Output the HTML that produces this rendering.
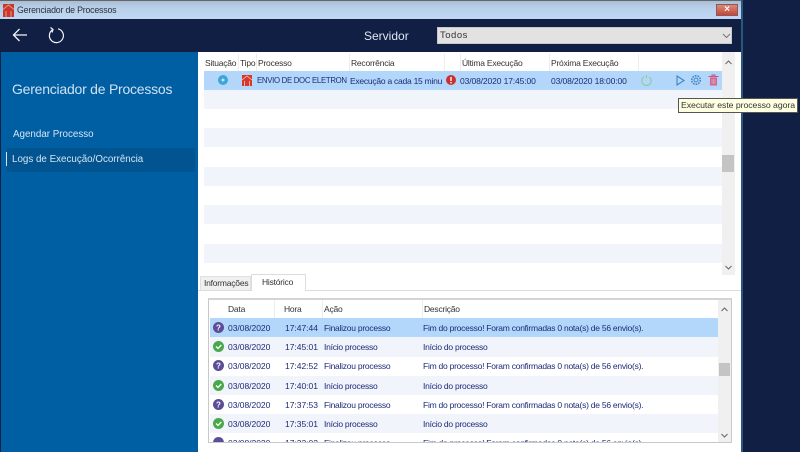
<!DOCTYPE html>
<html lang="pt"><head><meta charset="utf-8"><title>Gerenciador de Processos</title>
<style>
html,body{margin:0;padding:0;background:#121f45}
body{width:800px;height:452px;position:relative;overflow:hidden;font-family:"Liberation Sans",sans-serif;font-size:9px;color:#222;filter:blur(.3px)}
div,span{position:absolute;white-space:nowrap}
svg{position:absolute;overflow:visible}
.h{color:#333;font-size:8.500px;letter-spacing:-.22px;line-height:12px}
.c{color:#1d2a78;font-size:8.500px;letter-spacing:-.25px;line-height:12px}
.d{letter-spacing:-.02px}
.band{background:#f1f4fb}
.sep{width:1px;background:#ededed}
</style></head><body>
<div style="left:0;top:0;width:742px;height:19px;background:linear-gradient(#aabdd4,#b9d0ea 40%,#c0d8f2);border-top:1px solid #666;box-sizing:border-box"></div>
<svg style="left:3px;top:4px" width="11" height="13" viewBox="0 0 11 13"><rect width="11" height="13" fill="#c8382c"/><path d="M0 5.500L5.500 1 11 5.500M3 7V13M8 7V13" stroke="#f0b0a0" stroke-width=".8" fill="none"/></svg>
<div style="left:17px;top:4px;font-size:8.800px;letter-spacing:-.2px;line-height:12px;color:#2a2f38">Gerenciador de Processos</div>
<div style="left:716px;top:4px;width:22px;height:12px;background:linear-gradient(#dc8a78,#c2473a);border:1px solid #8a5a58;box-sizing:border-box;color:#fff;font-size:10px;line-height:10px;text-align:center;font-weight:bold">×</div>
<div style="left:0;top:19px;width:741px;height:33px;background:#121f45"></div>
<svg style="left:12px;top:27px" width="16" height="16" viewBox="0 0 16 16"><path d="M15 8H1.500M7.500 2L1.500 8l6 6" stroke="#f2f4f8" stroke-width="1.300" fill="none"/></svg>
<svg style="left:48px;top:27px" width="16" height="16" viewBox="0 0 16 16"><path d="M5 2.500A7 7 0 1 0 10 1.800M2.500 0.500L5 2.500 4 5.500" stroke="#f2f4f8" stroke-width="1.200" fill="none"/></svg>
<div style="left:364px;top:29px;font-size:12px;line-height:15px;color:#dfe6f0">Servidor</div>
<div style="left:437px;top:27px;width:295px;height:17px;background:#e2e2e2;border:1px solid #c8c8c8;box-sizing:border-box"></div>
<div style="left:440px;top:29px;font-size:9.500px;line-height:13px;letter-spacing:.5px;color:#333">Todos</div>
<svg style="left:722px;top:33px" width="9" height="6" viewBox="0 0 9 6"><path d="M1 1l3.500 3.500L8 1" stroke="#777" fill="none"/></svg>
<div style="left:1px;top:52px;width:197px;height:400px;background:#005ea3"></div>
<div style="left:12px;top:80px;font-size:14px;line-height:18px;color:#cfe2f2;letter-spacing:-.23px">Gerenciador de Processos</div>
<div style="left:13px;top:128px;font-size:9.800px;line-height:13px;color:#d5e5f3">Agendar Processo</div>
<div style="left:7px;top:148px;width:188px;height:24px;background:#01548f"></div>
<div style="left:6px;top:152px;width:1px;height:14px;background:#d5e5f3"></div>
<div style="left:12px;top:153px;font-size:9.800px;line-height:13px;color:#d5e5f3">Logs de Execução/Ocorrência</div>
<div style="left:198px;top:52px;width:543px;height:400px;background:#fff"></div>
<div style="left:741px;top:0;width:2px;height:452px;background:#28587e"></div>
<div class="h" style="left:205px;top:57px">Situação</div><div class="h" style="left:240px;top:57px">Tipo</div><div class="h" style="left:258px;top:57px">Processo</div><div class="h" style="left:351px;top:57px">Recorrência</div><div class="h" style="left:462px;top:57px">Última Execução</div><div class="h" style="left:551px;top:57px">Próxima Execução</div>
<div class="sep" style="left:238px;top:54px;height:17px"></div><div class="sep" style="left:256px;top:54px;height:17px"></div><div class="sep" style="left:349px;top:54px;height:17px"></div><div class="sep" style="left:444px;top:54px;height:17px"></div><div class="sep" style="left:460px;top:54px;height:17px"></div><div class="sep" style="left:549px;top:54px;height:17px"></div><div class="sep" style="left:638px;top:54px;height:17px"></div>
<div style="left:204px;top:71px;width:518px;height:19px;background:#b3d7fb"></div>
<div class="band" style="left:204px;top:90px;width:518px;height:19px"></div>
<div class="band" style="left:204px;top:128px;width:518px;height:19px"></div>
<div class="band" style="left:204px;top:167px;width:518px;height:19px"></div>
<div class="band" style="left:204px;top:205px;width:518px;height:19px"></div>
<div class="band" style="left:204px;top:244px;width:518px;height:19px"></div>
<svg style="left:218px;top:75px" width="10" height="10"><circle cx="5" cy="5" r="5" fill="#3fa5d6"/><circle cx="5" cy="5" r="1.500" fill="#bfe3f5"/></svg>
<svg style="left:242px;top:75px" width="10" height="11" viewBox="0 0 10 11"><rect width="10" height="11" fill="#d8382c"/><path d="M0 5L5 1l5 4M2.500 6v5M7.500 6v5" stroke="#f8c8c0" stroke-width=".8" fill="none"/></svg>
<div class="c" style="left:257px;top:75px;font-size:7.800px;letter-spacing:-.3px">ENVIO DE DOC ELETRON</div>
<div class="c" style="left:350px;top:75px">Execução a cada 15 minu</div>
<svg style="left:446px;top:75px" width="10" height="10"><circle cx="5" cy="5" r="5" fill="#cc2f2f"/><rect x="4.300" y="2" width="1.400" height="4" fill="#fff"/><rect x="4.300" y="7" width="1.400" height="1.400" fill="#fff"/></svg>
<div class="c" style="left:460px;top:75px;letter-spacing:-.12px">03/08/2020 17:45:00</div>
<div class="c" style="left:551px;top:75px;letter-spacing:-.12px">03/08/2020 18:00:00</div>
<svg style="left:641px;top:75px" width="11" height="11" viewBox="0 0 11 11"><path d="M3 1.800a4.700 4.700 0 1 0 5 0M5.500 0v3.500" stroke="#8ccb9a" stroke-width="1.100" fill="none"/></svg>
<svg style="left:676px;top:75px" width="9" height="11" viewBox="0 0 9 11"><path d="M1 1l7 4.500L1 10z" stroke="#3d85c0" stroke-width="1.100" fill="none"/></svg>
<svg style="left:690px;top:74px" width="12" height="12" viewBox="0 0 12 12"><circle cx="6" cy="6" r="2" stroke="#3d85c0" fill="none"/><circle cx="6" cy="6" r="4.300" stroke="#3d85c0" stroke-width="1.500" stroke-dasharray="1.700 1" fill="none"/></svg>
<svg style="left:708px;top:74px" width="11" height="12" viewBox="0 0 11 12"><path d="M0.500 2.500h10M4 2.500V1h3v1.500" stroke="#c9527e" fill="none"/><rect x="2" y="3.500" width="7" height="8" fill="#d0668f"/><path d="M4 5v5M5.500 5v5M7 5v5" stroke="#eab8cc" stroke-width=".6"/></svg>
<div style="left:722px;top:52px;width:13px;height:223px;background:#f0f0f0"></div>
<div style="left:722px;top:155px;width:12px;height:17px;background:#c4c4c4"></div>
<svg style="left:725px;top:60px" width="7" height="5" viewBox="0 0 7 5"><path d="M.500 4L3.500 1l3 3" stroke="#666" fill="none"/></svg>
<svg style="left:725px;top:265px" width="7" height="5" viewBox="0 0 7 5"><path d="M.500 1l3 3 3-3" stroke="#666" fill="none"/></svg>
<div style="left:678px;top:98px;width:120px;height:15px;background:#ffffe1;border:1px solid #555;box-sizing:border-box;font-size:8.700px;letter-spacing:-.05px;line-height:13px;padding-left:2px;color:#333">Executar este processo agora</div>
<div style="left:198px;top:290px;width:543px;height:1px;background:#dcdcdc"></div>
<div style="left:200px;top:276px;width:51px;height:14px;background:#f0f0f0;border:1px solid #e0e0e0;border-bottom:0;box-sizing:border-box"></div>
<div class="h" style="left:204px;top:277px;color:#333">Informações</div>
<div style="left:251px;top:274px;width:55px;height:17px;background:#fff;border:1px solid #dcdcdc;border-bottom:0;box-sizing:border-box"></div>
<div class="h" style="left:262px;top:276px;color:#333">Histórico</div>
<div style="left:208px;top:298px;width:524px;height:145px;border:1px solid #c8c8c8;border-top:2px solid #d4d4d4;box-sizing:border-box;overflow:hidden;background:#fff">
<div class="h" style="left:19px;top:3px">Data</div><div class="h" style="left:75px;top:3px">Hora</div><div class="h" style="left:115px;top:3px">Ação</div><div class="h" style="left:215px;top:3px">Descrição</div>
<div class="sep" style="left:65px;top:0;height:18px"></div><div class="sep" style="left:113px;top:0;height:18px"></div><div class="sep" style="left:213px;top:0;height:18px"></div>
<div style="left:1px;top:18px;width:508px;height:19px;background:#b3d7fb"></div>
<div class="band" style="left:1px;top:37px;width:508px;height:20px"></div>
<div class="band" style="left:1px;top:76px;width:508px;height:19px"></div>
<div class="band" style="left:1px;top:114px;width:508px;height:19px"></div>
<svg style="left:4px;top:22px" width="11" height="11"><circle cx="5.500" cy="5.500" r="5.500" fill="#5d4d98"/><text x="5.500" y="8.500" font-size="8" font-weight="bold" fill="#fff" text-anchor="middle" font-family="Liberation Sans">?</text></svg>
<svg style="left:4px;top:41px" width="11" height="11"><circle cx="5.500" cy="5.500" r="5.500" fill="#48a84a"/><path d="M3 5.500l2 2 3.300-3.500" stroke="#fff" stroke-width="1.300" fill="none"/></svg>
<svg style="left:4px;top:60px" width="11" height="11"><circle cx="5.500" cy="5.500" r="5.500" fill="#5d4d98"/><text x="5.500" y="8.500" font-size="8" font-weight="bold" fill="#fff" text-anchor="middle" font-family="Liberation Sans">?</text></svg>
<svg style="left:4px;top:80px" width="11" height="11"><circle cx="5.500" cy="5.500" r="5.500" fill="#48a84a"/><path d="M3 5.500l2 2 3.300-3.500" stroke="#fff" stroke-width="1.300" fill="none"/></svg>
<svg style="left:4px;top:99px" width="11" height="11"><circle cx="5.500" cy="5.500" r="5.500" fill="#5d4d98"/><text x="5.500" y="8.500" font-size="8" font-weight="bold" fill="#fff" text-anchor="middle" font-family="Liberation Sans">?</text></svg>
<svg style="left:4px;top:118px" width="11" height="11"><circle cx="5.500" cy="5.500" r="5.500" fill="#48a84a"/><path d="M3 5.500l2 2 3.300-3.500" stroke="#fff" stroke-width="1.300" fill="none"/></svg>
<svg style="left:4px;top:137px" width="11" height="11"><circle cx="5.500" cy="5.500" r="5.500" fill="#5d4d98"/></svg>
<div class="c d" style="left:19px;top:22px">03/08/2020</div><div class="c d" style="left:76px;top:22px">17:47:44</div><div class="c" style="left:115px;top:22px">Finalizou processo</div><div class="c" style="left:214px;top:22px">Fim do processo! Foram confirmadas 0 nota(s) de 56 envio(s).</div>
<div class="c d" style="left:19px;top:41px">03/08/2020</div><div class="c d" style="left:76px;top:41px">17:45:01</div><div class="c" style="left:115px;top:41px">Início processo</div><div class="c" style="left:214px;top:41px">Início do processo</div>
<div class="c d" style="left:19px;top:60px">03/08/2020</div><div class="c d" style="left:76px;top:60px">17:42:52</div><div class="c" style="left:115px;top:60px">Finalizou processo</div><div class="c" style="left:214px;top:60px">Fim do processo! Foram confirmadas 0 nota(s) de 56 envio(s).</div>
<div class="c d" style="left:19px;top:80px">03/08/2020</div><div class="c d" style="left:76px;top:80px">17:40:01</div><div class="c" style="left:115px;top:80px">Início processo</div><div class="c" style="left:214px;top:80px">Início do processo</div>
<div class="c d" style="left:19px;top:99px">03/08/2020</div><div class="c d" style="left:76px;top:99px">17:37:53</div><div class="c" style="left:115px;top:99px">Finalizou processo</div><div class="c" style="left:214px;top:99px">Fim do processo! Foram confirmadas 0 nota(s) de 56 envio(s).</div>
<div class="c d" style="left:19px;top:118px">03/08/2020</div><div class="c d" style="left:76px;top:118px">17:35:01</div><div class="c" style="left:115px;top:118px">Início processo</div><div class="c" style="left:214px;top:118px">Início do processo</div>
<div class="c d" style="left:19px;top:137px">03/08/2020</div><div class="c d" style="left:76px;top:137px">17:33:02</div><div class="c" style="left:115px;top:137px">Finalizou processo</div><div class="c" style="left:214px;top:137px">Fim do processo! Foram confirmadas 0 nota(s) de 56 envio(s).</div>
<div style="left:509px;top:0;width:13px;height:143px;background:#f0f0f0"></div>
<div style="left:510px;top:63px;width:11px;height:13px;background:#c4c4c4"></div>
<svg style="left:512px;top:7px" width="7" height="5" viewBox="0 0 7 5"><path d="M.500 4L3.500 1l3 3" stroke="#666" fill="none"/></svg>
<svg style="left:512px;top:133px" width="7" height="5" viewBox="0 0 7 5"><path d="M.500 1l3 3 3-3" stroke="#666" fill="none"/></svg>
</div>
</body></html>
